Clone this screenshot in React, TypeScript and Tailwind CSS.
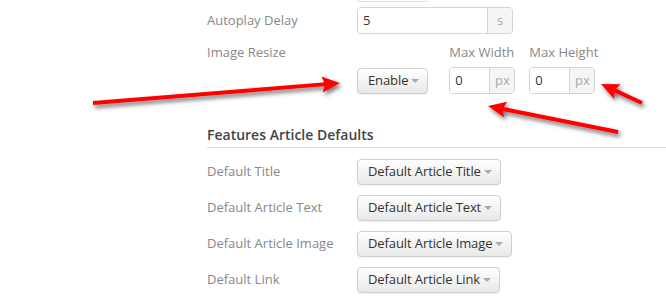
import React from "react";

type Pt = [number, number];

function Arrow({ from, to }: { from: Pt; to: Pt }) {
  const [x1, y1] = from;
  const [x2, y2] = to;
  const len = Math.hypot(x2 - x1, y2 - y1);
  const ux = (x2 - x1) / len;
  const uy = (y2 - y1) / len;
  const headLen = 18;
  const half = 8;
  const bx = x2 - ux * headLen;
  const by = y2 - uy * headLen;
  const head = [
    [x2, y2],
    [bx - uy * half, by + ux * half],
    [bx + ux * 3, by + uy * 3],
    [bx + uy * half, by - ux * half],
  ]
    .map((p) => p.join(","))
    .join(" ");
  return (
    <g filter="url(#shadow)">
      <line x1={x1} y1={y1} x2={bx + ux * 4} y2={by + uy * 4} stroke="#ff0000" strokeWidth={4} />
      <polygon points={head} fill="#ff0000" />
    </g>
  );
}

function Caret() {
  return <span className="ml-[3px] inline-block h-0 w-0 border-x-[4px] border-t-[4px] border-x-transparent border-t-[#aaa] align-middle" />;
}

function Dropdown({ label }: { label: string }) {
  return (
    <button className="flex h-[26px] items-center rounded-[4px] border border-[#cfcfcf] bg-gradient-to-b from-white to-[#e8e8e8] pl-[10px] pr-[8px] text-[13px] tracking-[-0.1px] text-[#333] shadow-[0_1px_1px_rgba(0,0,0,0.05)]">
      {label}
      <Caret />
    </button>
  );
}

function AddonInput({ value, unit, width }: { value: string; unit: string; width: string }) {
  return (
    <div className={`flex h-[27px] ${width} overflow-hidden rounded-[4px] border border-[#d4d4d4]`}>
      <div className="flex flex-1 items-center bg-white pl-[5px] text-[13px] text-[#333]">{value}</div>
      <div className="flex w-[25px] items-center justify-center border-l border-[#d4d4d4] bg-[#f5f5f5] text-[13px] text-[#aaa]">
        {unit}
      </div>
    </div>
  );
}

const rows = [
  { label: "Default Title", value: "Default Article Title" },
  { label: "Default Article Text", value: "Default Article Text" },
  { label: "Default Article Image", value: "Default Article Image" },
  { label: "Default Link", value: "Default Article Link" },
];

export default function App() {
  return (
    <div className="relative h-[298px] w-[666px] overflow-hidden bg-white font-['Open_Sans',sans-serif] text-[13px]">
      <div className="pl-[207px]">
        <div className="ml-[150px] h-[2px] w-[70px] rounded-b-[3px] border border-t-0 border-[#ddd]" />

        <div className="mt-[5px] flex h-[27px] items-center">
          <span className="w-[150px] text-[#888]">Autoplay Delay</span>
          <AddonInput value="5" unit="s" width="w-[156px]" />
        </div>

        <div className="mt-[9px] flex items-start">
          <span className="w-[150px] pt-0 leading-[18px] text-[#888]">Image Resize</span>
          <div className="flex items-end">
            <div className="flex flex-col">
              <Dropdown label="Enable" />
            </div>
            <div className="ml-[21px] flex flex-col">
              <span className="mb-[6px] leading-[18px] text-[#888]">Max Width</span>
              <AddonInput value="0" unit="px" width="w-[66px]" />
            </div>
            <div className="ml-[14px] flex flex-col">
              <span className="mb-[6px] leading-[18px] text-[#888]">Max Height</span>
              <AddonInput value="0" unit="px" width="w-[66px]" />
            </div>
          </div>
        </div>

        <h3 className="mt-[31px] border-b border-[#dcdcdc] pb-[2px] text-[14px] font-semibold leading-[20px] text-[#444]">
          Features Article Defaults
        </h3>

        <div className="mt-[11px] flex flex-col gap-[10px]">
          {rows.map((r) => (
            <div key={r.label} className="flex h-[26px] items-center">
              <span className="w-[150px] text-[#888]">{r.label}</span>
              <Dropdown label={r.value} />
            </div>
          ))}
        </div>
      </div>

      <svg className="pointer-events-none absolute inset-0" width={666} height={298}>
        <defs>
          <filter id="shadow" x="-20%" y="-50%" width="140%" height="200%">
            <feDropShadow dx="2" dy="3" stdDeviation="2" floodColor="#000" floodOpacity="0.55" />
          </filter>
        </defs>
        <Arrow from={[93, 103]} to={[340, 83]} />
        <Arrow from={[618, 132]} to={[488, 106]} />
        <Arrow from={[642, 103]} to={[601, 84]} />
      </svg>
    </div>
  );
}
